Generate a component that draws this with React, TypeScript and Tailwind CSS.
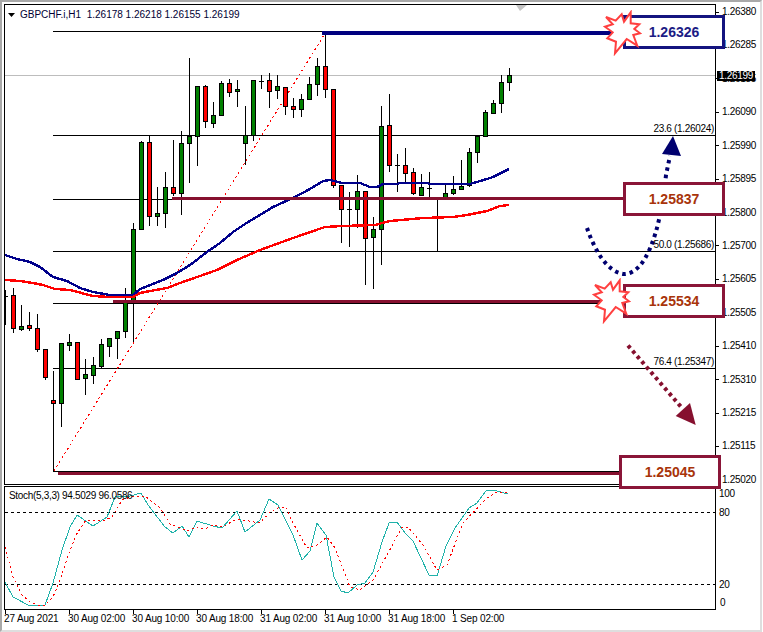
type Candle = [number, number, number, number, "g" | "r" | "d"];

const candles: Candle[] = [
  [290, 296, 297, 325, "d"], [288, 295, 328, 333, "r"], [305, 326, 329, 331, "g"], [312, 325, 328, 331, "r"],
  [314, 328, 349, 352, "r"], [349, 349, 377, 380, "r"], [371, 400, 403, 471, "r"], [343, 343, 403, 427, "g"],
  [334, 342, 345, 351, "g"], [342, 342, 379, 379, "r"], [359, 374, 378, 395, "g"], [357, 365, 375, 384, "g"],
  [339, 344, 366, 368, "g"], [338, 338, 346, 357, "g"], [331, 331, 338, 359, "g"], [288, 300, 331, 338, "g"],
  [223, 229, 300, 342, "g"], [141, 142, 229, 229, "g"], [136, 142, 216, 226, "r"], [187, 213, 216, 226, "g"],
  [172, 187, 213, 228, "g"], [140, 187, 193, 196, "r"], [131, 143, 193, 215, "g"], [58, 136, 143, 183, "g"],
  [86, 86, 136, 166, "g"], [85, 86, 121, 128, "r"], [102, 115, 123, 128, "g"], [81, 83, 115, 115, "g"],
  [79, 83, 92, 97, "r"], [80, 89, 91, 107, "g"], [106, 135, 143, 165, "g"], [80, 80, 135, 141, "g"],
  [75, 81, 82, 89, "d"], [73, 80, 91, 108, "r"], [75, 86, 90, 99, "g"], [87, 87, 106, 115, "r"],
  [98, 106, 109, 118, "r"], [94, 99, 109, 117, "g"], [77, 84, 99, 99, "g"], [58, 66, 84, 96, "g"],
  [33, 66, 89, 98, "r"], [89, 89, 185, 188, "r"], [185, 185, 209, 243, "r"], [192, 209, 210, 247, "d"],
  [175, 191, 209, 228, "g"], [191, 191, 238, 285, "r"], [217, 229, 237, 289, "g"], [106, 126, 229, 265, "g"],
  [94, 125, 165, 172, "r"], [154, 165, 166, 192, "d"], [148, 165, 173, 183, "r"], [168, 172, 193, 195, "r"],
  [174, 187, 195, 196, "g"], [172, 188, 189, 198, "d"], [198, 198, 199, 251, "d"], [184, 193, 198, 199, "g"],
  [176, 189, 193, 195, "g"], [160, 186, 189, 189, "g"], [148, 152, 185, 187, "g"], [136, 136, 152, 163, "g"],
  [110, 112, 136, 137, "g"], [100, 103, 113, 113, "g"], [75, 82, 103, 113, "g"], [68, 75, 82, 91, "g"],
];

const blueMa = "5,255 17,259 30,262 40,267 53,277 67,281 80,288 93,292 110,295 133,295 140,289 163,280 177,273 190,265 207,252 220,243 233,232 245,224 260,215 273,207 293,198 310,189 323,181 330,180 342,183 360,183 370,187 377,187 383,184 397,184 400,183 427,183 430,184 470,184 487,179 493,177 509,169";
const redMa = "5,280 20,281 33,283 43,285 55,289 70,290 93,296 110,297 133,297 140,293 150,291 167,288 180,283 200,276 217,270 237,260 260,250 293,238 325,227 342,226 375,225 390,221 423,218 453,217 467,215 487,211 500,206 509,205";
const stochMain = "5,582 13,597 30,606 45,605 53,583 62,550 70,527 77,515 93,526 107,517 115,497 130,496 141,493 148,505 165,527 173,533 182,526 189,537 197,521 213,526 222,528 237,511 245,532 260,520 269,499 278,505 293,535 302,560 310,551 317,523 326,535 334,577 341,591 348,593 357,585 365,583 373,572 382,542 389,523 397,522 405,533 413,541 429,575 437,576 446,546 455,528 469,508 477,503 486,491 493,490 508,494";
const stochSignal = "5,547 13,577 22,595 30,602 37,605 45,605 53,597 60,580 69,553 76,535 86,520 103,521 112,517 122,500 133,496 145,496 160,508 170,524 187,531 197,527 205,529 213,525 222,527 237,519 260,523 270,512 280,507 286,507 293,523 307,548 317,545 327,537 335,548 350,587 360,590 373,580 387,555 402,527 408,527 423,545 437,570 447,565 463,523 487,498 495,493 507,492";
const star = "606,17 615.7,20.7 621.7,14.3 624,21.7 630.7,12.3 630.7,23.3 639.3,24.3 634.3,29 640,33.3 633.3,35 637.3,45.7 626.7,39 615,53.3 616,41.7 607.3,38.3 612.7,32.3 605,26.7 612.7,24.3";

const priceLabels = ["1.26380", "1.26285", "1.26185", "1.26090", "1.25990", "1.25895", "1.25800", "1.25700", "1.25605", "1.25505", "1.25410", "1.25310", "1.25215", "1.25115", "1.25020"];
const timeLabels = ["27 Aug 2021", "30 Aug 02:00", "30 Aug 10:00", "30 Aug 18:00", "31 Aug 02:00", "31 Aug 10:00", "31 Aug 18:00", "1 Sep 02:00"];
const fibLevels = [31, 135, 199, 251, 303, 368, 471];

function Candles() {
  return (
    <g shapeRendering="crispEdges">
      {candles.map(([high, top, bottom, low, kind], i) => {
        const x = 5 + 8 * i;
        return (
          <g key={i}>
            <line x1={x + 0.5} x2={x + 0.5} y1={high} y2={low} stroke="#000" />
            {kind === "d" ? (
              <line x1={x - 2} x2={x + 3} y1={top + 0.5} y2={top + 0.5} stroke="#000" />
            ) : (
              <rect x={x - 1.5} y={top + 0.5} width={4} height={bottom - top} fill={kind === "g" ? "#008000" : "#ff0000"} stroke="#000" />
            )}
          </g>
        );
      })}
    </g>
  );
}

function Star({ y, x }: { x: number; y: number }) {
  return (
    <svg className="absolute z-20" style={{ left: x, top: y }} width="40" height="46" viewBox="603 10 40 46">
      <polygon points={star} fill="#fff" stroke="#ff4040" strokeWidth="2" />
    </svg>
  );
}

function LevelBox({ className, value }: { className: string; value: string }) {
  return (
    <div className={`absolute z-10 flex h-[34px] w-[102px] items-center justify-center border-[3px] bg-white text-[14px] font-bold tracking-normal ${className}`}>
      {value}
    </div>
  );
}

export default function App() {
  return (
    <div className="relative flex h-[632px] w-[762px] flex-col overflow-hidden border-2 border-t-[#a9a9a9] border-r-[#dedede] border-b-[#dedede] border-l-[#a9a9a9] bg-white pt-[2px] pl-[2px] font-['Liberation_Sans',sans-serif] text-[10px] leading-none tracking-[-0.32px] text-black">
      {/* main chart */}
      <div className="flex h-[481px]">
        <div className="relative h-[481px] w-[712px] border border-black">
          <svg width="710" height="479" viewBox="5 5 710 479" className="block">
            <line x1="5" x2="715" y1="75.5" y2="75.5" stroke="#bdbdbd" />
            <g shapeRendering="crispEdges">
              {fibLevels.map((y) => (
                <line key={y} x1="53" x2="715" y1={y + 0.5} y2={y + 0.5} stroke="#000" />
              ))}
              <line x1="53.5" x2="53.5" y1="403" y2="472" stroke="#000" />
            </g>
            <polygon points="516,5 527,5 520,11" fill="#c4c4c4" />
            <line x1="54" y1="471" x2="324" y2="35" stroke="#ff0000" strokeDasharray="2 3" shapeRendering="crispEdges" />
            <Candles />
            <polyline points={blueMa} fill="none" stroke="#00008b" strokeWidth="2.4" shapeRendering="crispEdges" />
            <polyline points={redMa} fill="none" stroke="#ff0000" strokeWidth="2.4" shapeRendering="crispEdges" />
            <g shapeRendering="crispEdges">
              <rect x="322" y="31" width="302" height="4" fill="#00007f" />
              <rect x="172" y="197" width="452" height="3" fill="#86102f" />
              <rect x="113" y="300" width="510" height="3" fill="#86102f" />
              <rect x="58" y="472" width="562" height="3" fill="#86102f" />
            </g>
            <path d="M587 228 C594 248 606 272 624 274 C645 274 660 235 666 175 L670 156" fill="none" stroke="#00006f" strokeWidth="4" strokeDasharray="3.5 4" />
            <polygon points="673,136 662,154 681,156" fill="#00006f" />
            <line x1="628" y1="345.5" x2="682" y2="408" stroke="#86102f" strokeWidth="4" strokeDasharray="3.5 3.5" />
            <polygon points="690,403 675.7,416 695.7,425" fill="#86102f" />
          </svg>

          <div className="absolute top-[5px] left-[3px] flex items-center gap-[5px]">
            <svg width="7" height="4" viewBox="0 0 7 4">
              <polygon points="0,0 7,0 3.5,4" fill="#000" />
            </svg>
            <span className="whitespace-pre tracking-normal text-[#000033]">GBPCHF.i,H1  1.26178 1.26218 1.26155 1.26199</span>
          </div>
          <span className="absolute top-[119px] right-px">23.6 (1.26024)</span>
          <span className="absolute top-[235px] right-px">50.0 (1.25686)</span>
          <span className="absolute top-[352px] right-px">76.4 (1.25347)</span>
        </div>

        <div className="flex flex-col gap-[19.43px] pt-[1px]">
          {priceLabels.map((label) => (
            <div key={label} className="flex h-[14px] shrink-0 items-center gap-[3px]">
              <div className="h-px w-[3px] bg-black" />
              <span>{label}</span>
            </div>
          ))}
        </div>
      </div>

      {/* stochastic */}
      <div className="mt-px flex h-[124px]">
        <div className="relative h-[124px] w-[712px] border border-black">
          <svg width="710" height="122" viewBox="5 487 710 122" className="block">
            <g shapeRendering="crispEdges">
              <line x1="5" x2="715" y1="512.5" y2="512.5" stroke="#000" strokeDasharray="3 3" />
              <line x1="5" x2="715" y1="584.5" y2="584.5" stroke="#000" strokeDasharray="3 3" />
            </g>
            <polyline points={stochMain} fill="none" stroke="#20b2aa" shapeRendering="crispEdges" />
            <polyline points={stochSignal} fill="none" stroke="#ff0000" strokeDasharray="2 3" shapeRendering="crispEdges" />
          </svg>
          <span className="absolute top-[4px] left-[4px]">Stoch(5,3,3) 94.5029 96.0586</span>
        </div>
        <div className="flex flex-col pt-px pl-[3px]">
          <span className="flex h-[14px] shrink-0 items-center">100</span>
          <span className="mt-[5px] flex h-[14px] shrink-0 items-center">80</span>
          <span className="mt-[58px] flex h-[14px] shrink-0 items-center">20</span>
          <span className="mt-[4px] flex h-[14px] shrink-0 items-center pl-px">0</span>
        </div>
      </div>

      {/* time axis */}
      <div className="flex w-[712px] pl-px tracking-[-0.15px]">
        {timeLabels.map((label) => (
          <div key={label} className="flex w-[64px] flex-col">
            <div className="h-[4px] w-px bg-black" />
            <span className="-ml-px whitespace-nowrap">{label}</span>
          </div>
        ))}
      </div>

      {/* overlays */}
      <div className="absolute top-[69px] left-[715px] z-10 flex h-[10px] items-center bg-black px-[2px] text-white">1.26199</div>
      <LevelBox className="top-[13px] left-[621px] border-[#14147f] text-[#1c1c85]" value="1.26326" />
      <LevelBox className="top-[180px] left-[621px] border-[#8a1538] text-[#a8340a]" value="1.25837" />
      <LevelBox className="top-[282px] left-[621px] border-[#8a1538] text-[#a8340a]" value="1.25534" />
      <LevelBox className="top-[453px] left-[617px] border-[#8a1538] text-[#a8340a]" value="1.25045" />
      <Star x={601} y={8} />
      <Star x={590} y={276} />
    </div>
  );
}
